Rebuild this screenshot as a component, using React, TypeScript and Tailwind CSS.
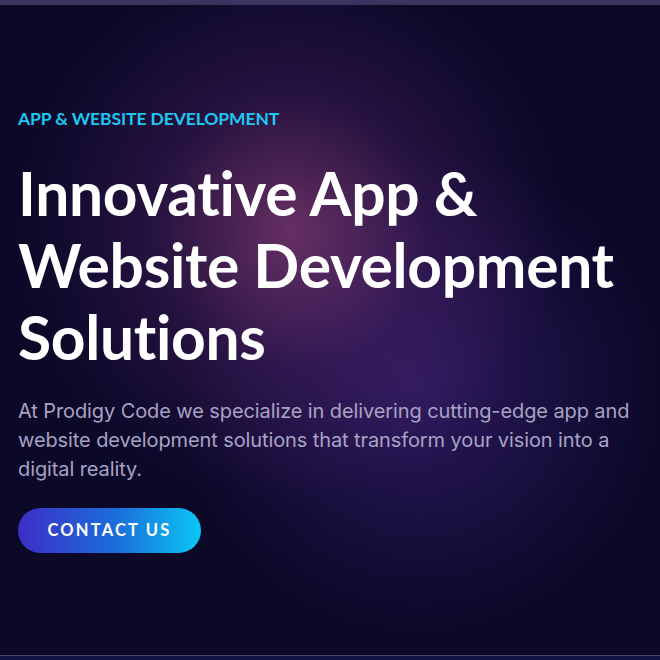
export default function App() {
  return (
    <div className="w-[660px] h-[660px] overflow-hidden flex flex-col bg-[#0b0828]">
      <div className="h-[5px] bg-[#3a3660] shrink-0" />
      <main className="flex-1 flex flex-col px-[18px] pt-[100px] bg-[radial-gradient(circle_at_290px_225px,rgba(155,70,130,0.62),rgba(95,40,115,0.3)_140px,transparent_270px),radial-gradient(circle_at_420px_385px,rgba(75,42,145,0.5),transparent_240px)]">
        <p className="text-[17.5px] font-bold text-[#1fc6f2] tracking-[-0.1px] leading-[28px] [font-family:Lato,'Noto_Sans',sans-serif]">
          APP &amp; WEBSITE DEVELOPMENT
        </p>
        <h1 className="mt-[24px] text-[60.5px] font-bold leading-[72px] text-white tracking-[-0.3px] [font-family:Lato,'Noto_Sans',sans-serif]">
          Innovative App &amp;<br />Website Development<br />Solutions
        </h1>
        <p className="mt-[24px] text-[20px] leading-[29px] text-[#a8a2c4] tracking-[-0.1px] [font-family:Inter,'Noto_Sans',sans-serif]">
          At Prodigy Code we specialize in delivering cutting-edge app and website development solutions that transform your vision into a digital reality.
        </p>
        <div className="mt-[24px]">
          <button className="h-[45px] w-[183px] rounded-full bg-[linear-gradient(90deg,#3b2ec6,#1b6fdc_55%,#0bc8f3)] text-white text-[16.5px] font-bold tracking-[2.2px] [font-family:Lato,'Noto_Sans',sans-serif]">
            CONTACT US
          </button>
        </div>
      </main>
      <div className="h-[1px] bg-[#4a4872] shrink-0" />
      <div className="h-[4px] bg-[#0f1442] shrink-0" />
    </div>
  );
}
